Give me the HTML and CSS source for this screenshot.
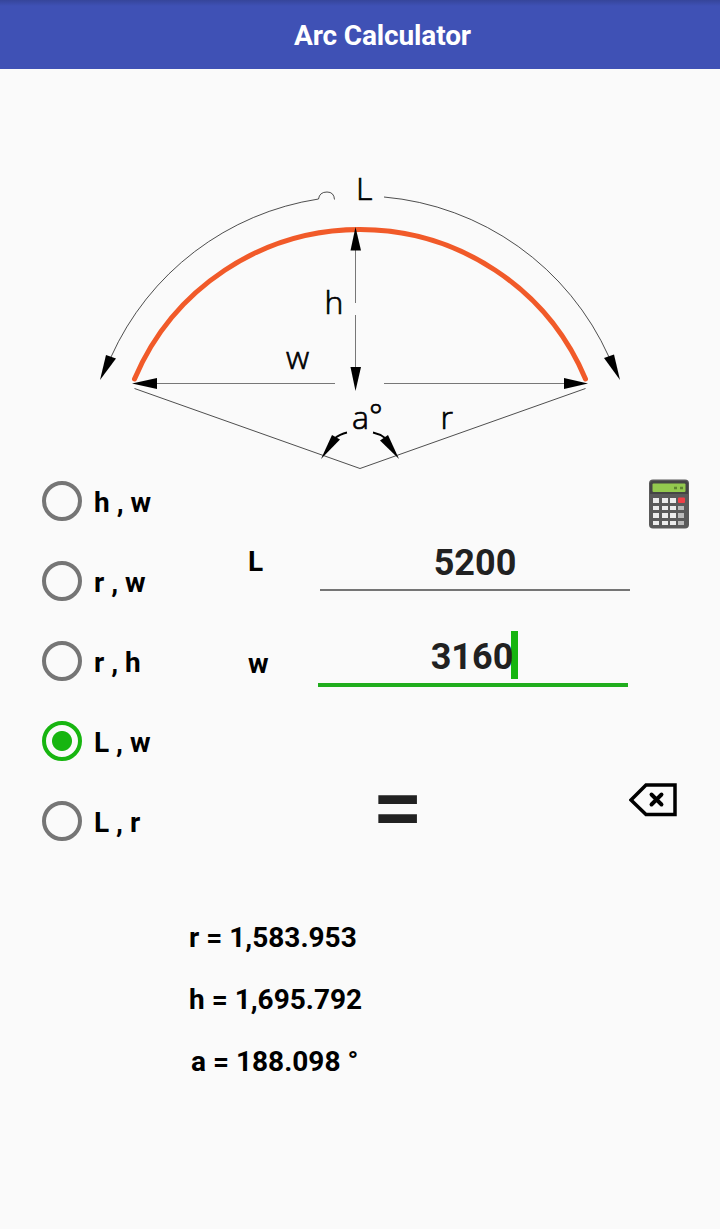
FILE: index.html
```html
<!DOCTYPE html>
<html lang="en">
<head>
    <meta charset="UTF-8">
    <title>Arc Calculator</title>
    <link rel="stylesheet" href="styles.css">
</head>
<body>
    <header class="toolbar">
        <h1>Arc Calculator</h1>
    </header>

    <svg class="diagram" viewBox="0 69 720 392" width="720" height="392">
        <!-- the arc itself -->
        <path class="arc" d="M134.500 379A244.800 244.800 0 0 1 585.500 379"/>
        <!-- dimension lines -->
        <g class="thin">
            <path d="M111 357A273 273 0 0 1 318.500 199Q319.500 192 327 192Q334 192 334.500 199.500"/>
            <path d="M384 197A273 273 0 0 1 609 357"/>
            <path d="M134.500 388.500L360 468.500L585.500 388.500"/>
        </g>
        <g class="dim">
            <path d="M355.500 240V303M355.500 315V375"/>
            <path d="M150 383.500H335M384 383.500H570"/>
        </g>
        <path class="angle" d="M334 439Q340 434 347 432.500M373 432.500Q380 434 385 438"/>
        <!-- arrow heads -->
        <g class="head">
            <path d="M100 380L106 355L116 358.500Z"/>
            <path d="M620 380L604 358L614 354.500Z"/>
            <path d="M355.500 227L350.500 250.500H361Z"/>
            <path d="M355.500 391L350.500 367H361Z"/>
            <path d="M132 383.500L157 378V389Z"/>
            <path d="M588 383.500L564 378V389Z"/>
            <path d="M321 459L332 435L340 439.500Z"/>
            <path d="M399 459L380 440.500L388 435Z"/>
        </g>
        <g class="names">
            <text x="356" y="199.500">L</text>
            <text x="324.500" y="314">h</text>
            <text x="286" y="369">w</text>
            <text x="352" y="428.500">a<tspan dy="-1.500">°</tspan></text>
            <text x="440.500" y="429">r</text>
        </g>
    </svg>

    <main class="calc">
        <div class="modes">
            <div class="mode"><span class="radio"></span>h , w</div>
            <div class="mode"><span class="radio"></span>r , w</div>
            <div class="mode"><span class="radio"></span>r , h</div>
            <div class="mode"><span class="radio checked"></span>L , w</div>
            <div class="mode"><span class="radio"></span>L , r</div>
        </div>

        <div class="form">
            <svg class="calc-icon" viewBox="0 0 42 52" width="42" height="52">
                <rect x="1" y="0.500" width="40" height="49" rx="4" fill="#5a5a5a"/>
                <path d="M2 15V5Q2 2 5 2H37Q40 2 40 5V15Z" fill="#454545"/>
                <rect x="4.500" y="4.500" width="33" height="8.500" rx="1" fill="#93c94e"/>
                <path d="M26 9H29M32 9H35" stroke="#5d8530" stroke-width="2.500"/>
                <g fill="#ececec">
                    <path d="M5 19H11V24H5ZM14 19H20V24H14ZM22 19H28V24H22Z"/>
                    <path d="M5 27H11V31H5ZM14 27H20V31H14ZM22 27H28V31H22Z"/>
                    <path d="M5 34H11V39H5ZM14 34H20V39H14ZM22 34H28V39H22Z"/>
                    <path d="M5 42H11V46H5ZM14 42H20V46H14ZM22 42H28V46H22Z"/>
                </g>
                <path d="M30 27H36V31H30ZM30 34H36V39H30ZM30 42H36V46H30Z" fill="#bbb"/>
                <rect x="30" y="18.500" width="7" height="5.500" rx="1" fill="#ef4048"/>
            </svg>
            <div class="field">
                <span class="label">L</span>
                <span class="value">5200</span>
            </div>
            <div class="field active">
                <span class="label">w</span>
                <span class="value">3160<i class="caret"></i></span>
            </div>
            <div class="actions">
                <span class="equals">=</span>
                <svg class="clear" viewBox="0 0 48 34" width="48" height="34">
                    <path d="M17 2H46V31.500H17L2 17Z" fill="none" stroke="#000" stroke-width="3.500"/>
                    <path d="M22.500 11.500L32.500 21.500M32.500 11.500L22.500 21.500" stroke="#000" stroke-width="3.900" stroke-linecap="round"/>
                </svg>
            </div>
        </div>
    </main>

    <section class="results">
        <div>r = 1,583.953</div>
        <div>h = 1,695.792</div>
        <div class="degrees">a = 188.098 °</div>
    </section>
</body>
</html>
```
FILE: styles.css
```css
body {
    margin: 0;
    width: 720px;
    height: 1229px;
    overflow: hidden;
    background-color: #fafafa;
    color: #000;
    font: bold 28px/40px Roboto, sans-serif;
}
.toolbar {
    height: 69px;
    padding-left: 45px;
    box-sizing: border-box;
    background: linear-gradient(#36459a, #3f51b5 6px);
    color: #fff;
    text-align: center;
}
.toolbar h1 {
    margin: 0;
    font-size: 28px;
    line-height: 71px;
    letter-spacing: -0.15px;
}
.diagram {
    display: block;
    overflow: visible;
}
.diagram path {
    fill: none;
}
.diagram .arc {
    stroke: #f15a29;
    stroke-width: 5;
    stroke-linecap: round;
}
.thin {
    stroke: #222;
    stroke-width: 0.8;
}
.dim {
    stroke: #777;
    stroke-width: 1;
}
.angle {
    stroke: #000;
    stroke-width: 1.8;
}
.diagram .head path {
    fill: #000;
}
.names {
    font: 300 32px "Open Sans", sans-serif;
    stroke: #000;
    stroke-width: 0.7;
}
.calc {
    display: grid;
    grid-template-columns: 248px 1fr;
    height: 400px;
}
.modes {
    padding-left: 42px;
}
.mode {
    display: flex;
    align-items: flex-start;
    gap: 12px;
    height: 80px;
    line-height: 84px;
}
.radio {
    width: 40px;
    height: 40px;
    margin-top: 20px;
    box-sizing: border-box;
    border: 4px solid #757575;
    border-radius: 50%;
}
.radio.checked {
    border-color: #17b510;
    background: radial-gradient(circle, #17b510 9.500px, transparent 10.500px);
}
.form {
    display: flex;
    flex-direction: column;
}
.calc-icon {
    align-self: flex-end;
    margin: 18px 30px 0 0;
}
.field {
    display: flex;
    height: 60px;
    align-items: flex-end;
}
.label {
    width: 72px;
    padding-bottom: 9px;
}
.value {
    width: 310px;
    height: 48px;
    border-bottom: 2px solid #757575;
    color: #212121;
    font-size: 36px;
    line-height: 44px;
    text-align: center;
}
.active {
    height: 96px;
}
.active .label {
    width: 70px;
    padding-bottom: 3px;
}
.active .value {
    height: 52px;
    border-bottom: 4px solid #20ad1d;
    line-height: 52px;
}
/* sits behind the last digit */
.caret {
    display: inline-block;
    position: relative;
    top: -4px;
    z-index: -1;
    width: 7px;
    height: 48px;
    margin: 0 -3px 0 -2px;
    background-color: #17b510;
    vertical-align: middle;
}
.actions {
    display: flex;
    justify-content: space-between;
    padding: 96px 43px 0 124px;
}
.equals {
    color: #212121;
    font-size: 91px;
    font-weight: 500;
    line-height: 50px;
}
.results {
    padding: 46px 0 0 189px;
    line-height: 62px;
}
.degrees {
    padding-left: 2px;
}
```
